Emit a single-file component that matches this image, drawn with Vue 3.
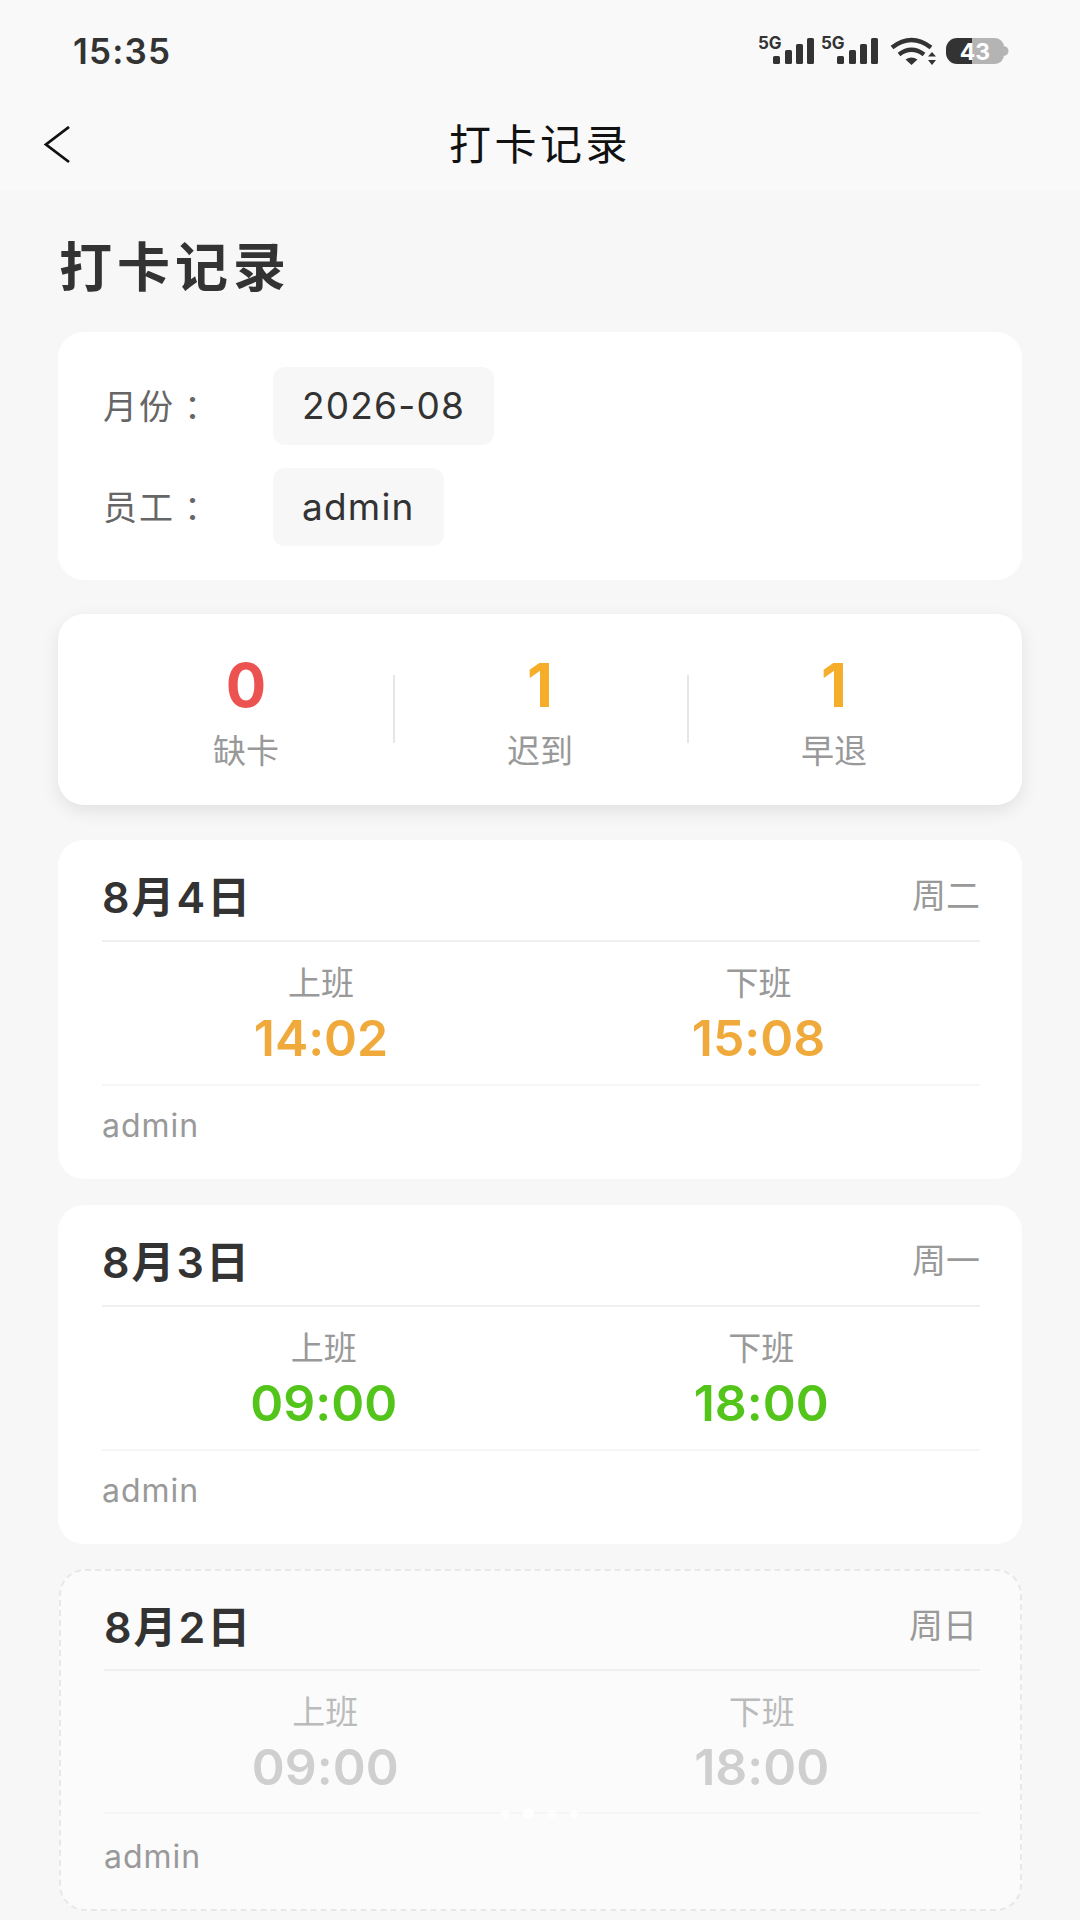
<script setup>
const records = [
  { date: '8月4日', week: '周二', in: '14:02', out: '15:08', tone: 'late', user: 'admin' },
  { date: '8月3日', week: '周一', in: '09:00', out: '18:00', tone: 'ok', user: 'admin' },
  { date: '8月2日', week: '周日', in: '09:00', out: '18:00', tone: 'off', user: 'admin' }
]
const stats = [
  { n: '0', label: '缺卡', tone: 'red' },
  { n: '1', label: '迟到', tone: 'amber' },
  { n: '1', label: '早退', tone: 'amber' }
]
</script>

<template>
  <div class="page">
    <header class="top">
      <div class="status">
        <span class="clock">15:35</span>
        <svg class="sys" width="250" height="34" viewBox="760 34 250 34">
          <g fill="#333">
            <text x="759" y="49" class="five">5G</text>
            <rect x="774" y="56" width="7" height="8" rx="1.5"/><rect x="786" y="50" width="7" height="14" rx="1.5"/><rect x="797" y="44" width="7" height="20" rx="1.5"/><rect x="808" y="38" width="7" height="26" rx="1.5"/>
            <text x="822" y="49" class="five">5G</text>
            <rect x="838" y="56" width="7" height="8" rx="1.5"/><rect x="850" y="50" width="7" height="14" rx="1.5"/><rect x="861" y="44" width="7" height="20" rx="1.5"/><rect x="872" y="38" width="7" height="26" rx="1.5"/>
          </g>
          <g fill="none" stroke="#333" stroke-width="4.5">
            <path d="M893 47.5C906 37.5 919 37.5 932 47.5"/>
            <path d="M900 54.5C908 48.5 917 48.5 925 54.5"/>
          </g>
          <path d="M906.5 59.5Q912.5 55.5 918.5 59.5L912.5 65Z" fill="#333"/>
          <path d="M933 52L937 56.5H929ZM933 65L929 60H937Z" fill="#333"/>
          <path d="M958 38H973V64H958A11 11 0 0 1 947 53V49A11 11 0 0 1 958 38Z" fill="#333"/>
          <path d="M973 38H996A9 9 0 0 1 1005 47V55A9 9 0 0 1 996 64H973Z" fill="#b4b4b4"/>
          <path d="M1005 46Q1009.5 47 1009.5 51Q1009.5 55 1005 56Z" fill="#b4b4b4"/>
          <text x="976" y="59.5" text-anchor="middle" class="batt">43</text>
        </svg>
      </div>
      <div class="nav">
        <svg class="back" width="30" height="38" viewBox="0 0 30 38">
          <path d="M26 1L3 18.5L26 36" fill="none" stroke="#111" stroke-width="2.8"/>
        </svg>
        <span class="nav-title">打卡记录</span>
      </div>
    </header>

    <main class="main">
      <h1 class="title">打卡记录</h1>

      <section class="card filters">
        <div class="filter"><span class="f-label">月份<span class="colon">：</span></span><span class="pill">2026-08</span></div>
        <div class="filter"><span class="f-label">员工<span class="colon">：</span></span><span class="pill">admin</span></div>
      </section>

      <section class="card stats">
        <div v-for="s in stats" :key="s.label" class="stat">
          <div class="stat-n" :class="s.tone">{{ s.n }}</div>
          <div class="stat-l">{{ s.label }}</div>
        </div>
      </section>

      <section v-for="r in records" :key="r.date" class="card rec" :class="{ faded: r.tone === 'off' }">
        <div class="rec-head"><span class="rec-date">{{ r.date }}</span><span class="rec-week">{{ r.week }}</span></div>
        <div class="rec-times">
          <div class="slot"><div class="slot-l">上班</div><div class="slot-t" :class="r.tone">{{ r.in }}</div></div>
          <div class="slot"><div class="slot-l">下班</div><div class="slot-t" :class="r.tone">{{ r.out }}</div></div>
        </div>
        <div class="rec-user">{{ r.user }}</div>
        <div v-if="r.tone === 'off'" class="dots"><i></i><i class="on"></i><i></i><i></i></div>
      </section>
    </main>
  </div>
</template>

<style>
html, body { margin: 0; background: #f7f7f7; }
</style>

<style scoped>
.page {
  width: 1080px; height: 1920px; overflow: hidden; background: #f7f7f7;
  font-family: "Inter", "Noto Sans CJK SC", sans-serif; color: #333;
}
.top { height: 190px; background: #f9f9f9; }
.status { height: 100px; display: flex; justify-content: space-between; align-items: flex-start; padding: 0 71px 0 73px; }
.clock { margin-top: 31px; font-size: 35px; line-height: 40px; font-weight: 600; color: #333; letter-spacing: 1.2px; font-feature-settings: "calt" 0; }
.sys { margin-top: 34px; }
.five { font: 700 17px "Inter", sans-serif; }
.batt { font: 700 23px "Inter", sans-serif; fill: #fff; }
.nav { height: 86px; box-sizing: border-box; padding-bottom: 3px; position: relative; display: flex; align-items: center; justify-content: center; }
.back { position: absolute; left: 43px; top: 26px; }
.nav-title { font-size: 42px; color: #111; letter-spacing: 3.5px; }
.main { padding: 0 58px; display: flex; flex-direction: column; }
.title { margin: 48px 0 34px 1px; height: 60px; font-size: 53px; line-height: 60px; font-weight: 700; color: #333; letter-spacing: 5px; }
.card { background: #fff; border-radius: 26px; width: 964px; box-sizing: border-box; }
.filters { height: 248px; padding: 35px 45px; display: flex; flex-direction: column; gap: 23px; margin-bottom: 34px; }
.filter { display: flex; align-items: center; height: 78px; }
.f-label { width: 170px; padding-bottom: 3px; font-size: 34px; letter-spacing: 2px; color: #666; }
.colon { margin-left: 9px; }
.pill { height: 78px; line-height: 78px; padding: 0 29px; background: #f7f7f7; border-radius: 12px; font-size: 37px; color: #333; letter-spacing: 1.2px; }
.stats { height: 191px; margin-bottom: 35px; padding: 3px 41px 0; display: grid; grid-template-columns: repeat(3, 1fr); align-items: center; box-shadow: 0 6px 18px rgba(0,0,0,.09); }
.stat { position: relative; text-align: center; }
.stat + .stat::before { content: ""; position: absolute; left: 0; top: 26px; width: 2px; height: 68px; background: #e6e6e6; }
.stat-n { font-size: 60px; line-height: 72px; font-weight: 700; }
.stat-l { font-size: 33px; line-height: 44px; color: #999; margin-top: 8px; }
.red { color: #ec5350; }
.amber { color: #f5ad2a; }
.rec { height: 339px; padding: 0 42px 0 44px; margin-bottom: 26px; position: relative; }
.rec-head { height: 102px; padding-top: 7px; box-sizing: border-box; border-bottom: 2px solid #efefef; display: flex; justify-content: space-between; align-items: center; }
.rec-date { font-size: 43px; font-weight: 600; color: #333; letter-spacing: 2px; }
.rec-week { font-size: 34px; color: #999; }
.rec-times { height: 144px; box-sizing: border-box; border-bottom: 2px solid #f6f6f6; display: flex; justify-content: space-around; padding: 20px 3px 0 0; }
.slot { text-align: center; }
.slot-l { font-size: 33px; line-height: 42px; color: #999; }
.slot-t { font-size: 50px; line-height: 60px; font-weight: 600; margin-top: 4px; font-feature-settings: "calt" 0; }
.late { color: #f0aa3c; }
.ok { color: #52c41a; }
.off { color: #cfcfcf; }
.rec-user { height: 92px; line-height: 80px; font-size: 32px; color: #999; letter-spacing: 1px; }
.faded { width: 963px; height: 342px; margin-left: 1px; margin-top: -1px; padding: 0 40px 0 43px; background: #fbfbfb; border: 2px dashed #e8e8e8; }
.faded .rec-head { height: 100px; }
.faded .rec-week { margin-right: 3px; }
.faded .rec-times { height: 143px; }
.faded .rec-user { line-height: 85px; }
.faded .slot-l { color: #bbb; }
.dots { position: absolute; left: 440px; top: 237px; display: flex; gap: 14px; align-items: center; }
.dots i { width: 8px; height: 8px; border-radius: 50%; background: #fff; opacity: .8; }
.dots i.on { width: 11px; height: 11px; opacity: 1; }
</style>
